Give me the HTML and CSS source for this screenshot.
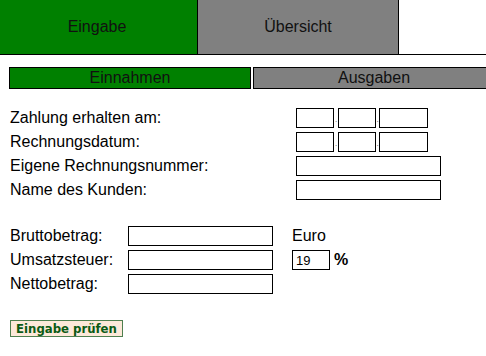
FILE: index.html
```html
<!DOCTYPE html>
<html lang="de">
<head>
    <meta charset="UTF-8">
    <meta name="viewport" content="width=device-width, initial-scale=1.0">
    <title>Buchhaltung</title>
    <link rel="stylesheet" href="styles.css">
</head>
<body>

    <div class="tabs">
        <div class="tab tab-eingabe active">Eingabe</div>
        <div class="tab tab-uebersicht">Übersicht</div>
    </div>

    <div class="subtabs">
        <div class="subtab active">Einnahmen</div>
        <div class="subtab">Ausgaben</div>
    </div>

    <form class="entry" onsubmit="return false;">
        <div class="fields fields-head">
            <label>Zahlung erhalten am:</label>
            <div class="date">
                <input type="text" class="dd"><span class="dot dot-1">.</span><input type="text" class="mm"><span class="dot dot-2">.</span><input type="text" class="yyyy">
            </div>

            <label>Rechnungsdatum:</label>
            <div class="date">
                <input type="text" class="dd"><span class="dot dot-1">.</span><input type="text" class="mm"><span class="dot dot-2">.</span><input type="text" class="yyyy">
            </div>

            <label>Eigene Rechnungsnummer:</label>
            <input type="text" class="wide">

            <label>Name des Kunden:</label>
            <input type="text" class="wide">
        </div>

        <div class="fields fields-amount">
            <label>Bruttobetrag:</label>
            <input type="text" class="wide">
            <span class="unit">Euro</span>

            <label>Umsatzsteuer:</label>
            <input type="text" class="wide">
            <span class="unit"><input type="text" class="rate" value="19"><b class="percent">%</b></span>

            <label>Nettobetrag:</label>
            <input type="text" class="wide">
            <span></span>
        </div>

        <button type="submit" class="check">Eingabe prüfen</button>
    </form>

</body>
</html>
```

FILE: styles.css
```css
body {
    font-family: Arial, "Liberation Sans", sans-serif;
    font-size: 16px;
    color: #000;
    background-color: #fff;
    margin: 0;
    overflow: hidden;
}

/* main tabs */
.tabs {
    display: flex;
    height: 54px;
    border-bottom: 1px solid #000;
}
.tab {
    display: flex;
    align-items: center;
    justify-content: center;
    border-right: 1px solid #000;
    background-color: #808080;
    color: #111;
}
.tab-eingabe {
    width: 194px;
    padding-right: 3px;
}
.tab-uebersicht {
    width: 200px;
}
.tab.active {
    background-color: #008000;
}

/* sub tabs */
.subtabs {
    display: flex;
    gap: 2px;
    margin: 12px 0 0 9px;
    overflow: hidden;
}
.subtab {
    flex: 0 0 240px;
    height: 20px;
    line-height: 20px;
    text-align: center;
    border: 1px solid #000;
    background-color: #808080;
    color: #111;
}
.subtab.active {
    background-color: #008000;
}

/* form */
.entry {
    padding-left: 10px;
}
.fields {
    display: grid;
    grid-auto-rows: 20px;
    row-gap: 4px;
    align-items: center;
}
.fields-head {
    grid-template-columns: 286px auto;
    margin-top: 19px;
}
.fields-amount {
    grid-template-columns: 118px 145px auto;
    margin-top: 26px;
}
.fields label {
    line-height: 20px;
    white-space: nowrap;
}

input {
    box-sizing: border-box;
    height: 20px;
    margin: 0;
    padding: 0 2px;
    border: 1px solid #000;
    background: #fff;
    font-family: Arial, "Liberation Sans", sans-serif;
    font-size: 13px;
    color: #000;
    outline: none;
}
.date {
    display: flex;
    align-items: flex-end;
    height: 20px;
}
.date .dd,
.date .mm {
    width: 38px;
}
.date .yyyy {
    width: 49px;
}
.dot {
    font-size: 8px;
    line-height: 8px;
    margin-bottom: 4px;
    text-align: center;
    color: #444;
    overflow: hidden;
}
.dot-1 {
    width: 4px;
}
.dot-2 {
    width: 3px;
}
.wide {
    width: 145px;
}
.unit {
    display: flex;
    align-items: center;
    padding-left: 19px;
    line-height: 20px;
}
.rate {
    width: 38px;
    padding-left: 3px;
}
.percent {
    margin-left: 4px;
    font-size: 16px;
}

.check {
    display: block;
    margin-top: 26px;
    width: 113px;
    height: 17px;
    padding: 0;
    border: 1px solid #4f7f4f;
    background-color: #fde9d9;
    color: #0b5a14;
    font-family: "DejaVu Sans Condensed", "DejaVu Sans", sans-serif;
    font-stretch: condensed;
    font-size: 13px;
    line-height: 15px;
    font-weight: bold;
    cursor: pointer;
}
```
